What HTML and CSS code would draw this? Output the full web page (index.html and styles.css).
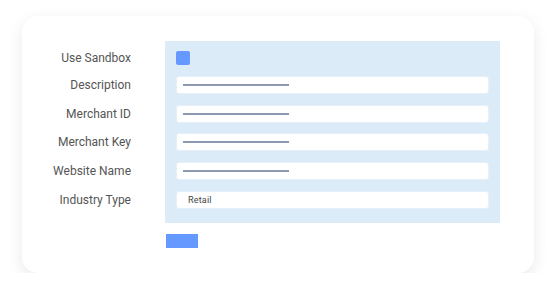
FILE: index.html
```html
<!DOCTYPE html>
<html>
<head>
<meta charset="utf-8">
<link rel="stylesheet" href="styles.css">
</head>
<body>
<div class="card">
  <div class="form">
    <div class="labels">
      <div class="label first">Use Sandbox</div>
      <div class="label">Description</div>
      <div class="label">Merchant ID</div>
      <div class="label">Merchant Key</div>
      <div class="label">Website Name</div>
      <div class="label">Industry Type</div>
    </div>
    <div class="right">
      <div class="panel">
        <div class="row first"><span class="check"></span></div>
        <div class="row"><div class="input"><span class="line"></span></div></div>
        <div class="row"><div class="input"><span class="line"></span></div></div>
        <div class="row"><div class="input"><span class="line"></span></div></div>
        <div class="row"><div class="input"><span class="line"></span></div></div>
        <div class="row"><div class="input"><span class="val">Retail</span></div></div>
      </div>
      <div class="btn"></div>
    </div>
  </div>
</div>
</body>
</html>
```
FILE: styles.css
```css
html, body { margin: 0; padding: 0; background: #fff; }
body { font-family: Roboto, "Noto Sans", sans-serif; }
.card {
  margin: 16px 0 0 22px;
  width: 512px;
  height: 257px;
  box-sizing: border-box;
  background: #fff;
  border-radius: 16px;
  box-shadow: 0 5px 16px rgba(0,0,0,0.09);
  padding: 25px 34px 0 0;
}
.form { display: flex; gap: 34px; }
.labels {
  width: 109px;
  display: flex;
  flex-direction: column;
  gap: 10.67px;
  padding-top: 10px;
}
.label {
  height: 18px;
  line-height: 18px;
  text-align: right;
  font-size: 12px;
  color: #555;
}
.label.first { height: 14px; line-height: 14px; margin-bottom: 0.33px; }
.right { width: 335px; display: flex; flex-direction: column; gap: 11px; }
.panel {
  background: #dcebf8;
  padding: 10px 11px 14.7px 11px;
  display: flex;
  flex-direction: column;
  gap: 10.67px;
}
.row { height: 18px; display: flex; align-items: center; }
.row.first { height: 14px; margin-bottom: 0.33px; }
.check {
  width: 14px; height: 14px;
  background: #6699ff;
  border-radius: 2px;
  margin-left: -0.5px;
}
.input {
  width: 313px; height: 18px;
  box-sizing: border-box;
  background: #fff;
  border: 1px solid #e6f0fa;
  border-radius: 3px;
  display: flex; align-items: center;
  padding-left: 6px;
}
.line { width: 106px; height: 2px; background: #8c99b0; }
.val { font-size: 9px; color: #444; padding-left: 5px; letter-spacing: 0.2px; }
.btn { width: 32px; height: 14px; background: #6699ff; margin-left: 1px; }
```
